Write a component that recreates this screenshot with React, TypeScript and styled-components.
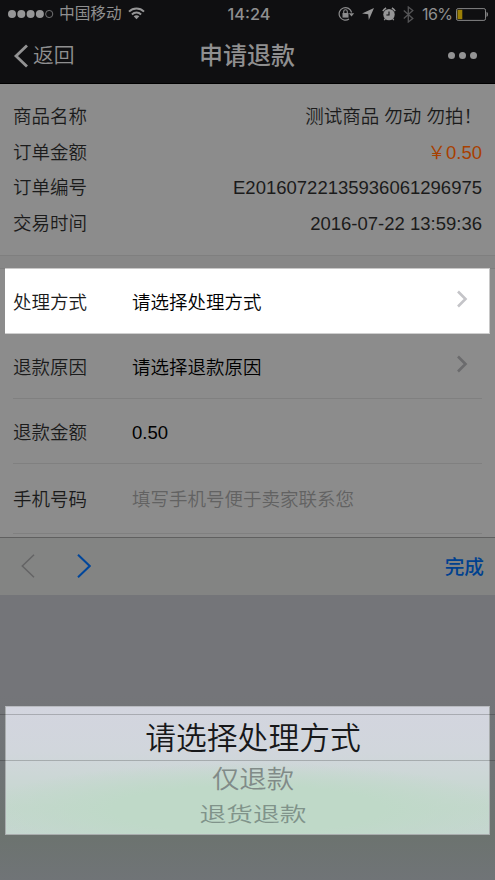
import React from "react";
import styled, { createGlobalStyle, css } from "styled-components";

const Global = createGlobalStyle`
  * { box-sizing: border-box; }
  body { margin: 0; background: #747579; }
`;

const Screen = styled.main`
  width: 495px;
  height: 880px;
  overflow: hidden;
  display: flex;
  flex-direction: column;
  background: #8c8c8c;
  color: #1b1b1b;
  font-family: "Liberation Sans", "Noto Sans CJK SC", sans-serif;
  font-size: 18.5px;
  font-weight: 350;
`;

const Header = styled.header`
  height: 84px;
  flex: none;
  background: #0f0f11;
  border-bottom: 1px solid #000;
  color: #8f8f90;
`;

const StatusBar = styled.div`
  height: 28px;
  display: grid;
  grid-template-columns: 1fr auto 1fr;
  align-items: center;
  padding: 0 6px 0 8px;
  font-family: Inter, "Noto Sans CJK SC", sans-serif;
  font-size: 16px;
  line-height: 28px;
  font-weight: 400;
`;

const Carrier = styled.div`
  display: flex;
  align-items: center;
  font-size: 15.7px;
  svg { display: block; }
  svg:last-child { position: relative; top: -1px; }
  span { margin: 0 6px 0 5px; }
`;

const Clock = styled.time`
  font-weight: 500;
  font-size: 16.3px;
  margin-left: 1px;
`;

const Indicators = styled.div`
  display: flex;
  align-items: center;
  justify-content: flex-end;
  svg { display: block; flex: none; }
`;

const Percent = styled.span`
  margin: 0 4px 0 8px;
  width: 30px;
  font-size: 16px;
  letter-spacing: -0.6px;
  white-space: nowrap;
`;

const NavBar = styled.nav`
  height: 55px;
  display: grid;
  grid-template-columns: 1fr auto 1fr;
  align-items: center;
  padding: 0 18px 0 13px;
`;

const Back = styled.div`
  display: flex;
  align-items: center;
  gap: 4px;
  font-size: 20.8px;
  line-height: 32px;
  padding-top: 1px;
`;

const Title = styled.h1`
  margin: 0 0 0 4px;
  font-size: 24px;
  line-height: 34px;
  padding-top: 1px;
  font-weight: 500;
`;

const More = styled.div`
  display: flex;
  justify-content: flex-end;
  gap: 4px;
`;

const Dot = styled.i`
  width: 7px;
  height: 7px;
  border-radius: 50%;
  background: #939394;
`;

const Order = styled.section`
  height: 171px;
  flex: none;
  padding: 15px 13px 0;
`;

const OrderLine = styled.div`
  height: 35.7px;
  display: flex;
  justify-content: space-between;
  align-items: center;
  line-height: 28px;
`;

const OrderValue = styled.span<{ $price?: boolean }>`
  color: ${(p) => (p.$price ? "#a84000" : "#1b1b1b")};
  white-space: pre;
`;

const Gap = styled.div`
  height: 14px;
  flex: none;
  background: #878787;
  border-top: 1px solid #7f7f7f;
  border-bottom: 1px solid #7f7f7f;
`;

const Form = styled.section`
  height: 269px;
  flex: none;
  margin-top: -1px;
`;

const Field = styled.div<{ $height: number; $active?: boolean }>`
  height: ${(p) => p.$height}px;
  margin: 0 13px;
  display: grid;
  grid-template-columns: 119px 1fr 13px;
  align-items: center;
  padding: 3px 13px 0 0;
  line-height: 28px;
  border-bottom: 1px solid #808080;
  ${(p) =>
    p.$active &&
    css`
      margin: 0 5px;
      padding: 3px 20px 0 8px;
      background: #fff;
      border-top: 1px solid #c9c8c8;
      border-right: 1px solid #c8c8c8;
      border-bottom-color: #cfcfcf;
    `}
`;

const FieldValue = styled.span<{ $placeholder?: boolean }>`
  color: ${(p) => (p.$placeholder ? "#626262" : "#000")};
`;

const Toolbar = styled.div`
  height: 58px;
  flex: none;
  display: flex;
  align-items: center;
  padding: 0 11px 0 21px;
  background: #838483;
  border-top: 1px solid #606060;
`;

const Stepper = styled.div`
  display: flex;
  gap: 42px;
  flex: 1;
  margin-top: -2px;
  svg { display: block; }
`;

const Done = styled.span`
  color: #00418f;
  font-size: 19.7px;
  line-height: 30px;
  padding-top: 1px;
  font-weight: 500;
`;

const Picker = styled.section`
  flex: 1;
  display: flex;
  flex-direction: column;
  padding-top: 111px;
  background: linear-gradient(#747579 0, #747579 100px, #6f7476 170px, #6c736f 240px, #707477 285px);
`;

const Wheel = styled.div`
  height: 129px;
  margin: 0 5px;
  padding: 7px 0 0 10px;
  display: flex;
  flex-direction: column;
  background:
    radial-gradient(ellipse 270px 46px at 50% 102px, #bfd9c8 0%, #bfd9c8 50%, rgba(191, 217, 200, 0) 100%),
    linear-gradient(#d3d5df 0, #d1d6dc 45px, #cdd7d7 65px, #c4d7cd 100px, #c5d6d0 129px);
  border: 1px solid #a9adae;
  border-top-color: #b9bbc0;
`;

const Option = styled.div<{ $kind: "selected" | "near" | "far" }>`
  text-align: center;
  white-space: nowrap;
  ${(p) =>
    p.$kind === "selected" &&
    css`
      height: 47px;
      margin: 0 -6px 0 -16px;
      border-top: 1px solid rgba(0, 0, 0, 0.2);
      border-bottom: 1px solid rgba(0, 0, 0, 0.2);
      color: #17181a;
      font-size: 30.8px;
      line-height: 48px;
      padding-left: 11px;
    `}
  ${(p) =>
    p.$kind === "near" &&
    css`
      height: 37px;
      padding-left: 1px;
      color: #818b88;
      font-size: 27.4px;
      line-height: 38px;
      transform: scaleY(0.92);
    `}
  ${(p) =>
    p.$kind === "far" &&
    css`
      height: 34px;
      padding-left: 1px;
      color: #80938a;
      font-size: 26.8px;
      line-height: 35px;
      transform: scaleY(0.75);
    `}
`;

const Chevron = () => (
  <svg width="13" height="18" viewBox="0 0 13 18" fill="none" stroke="currentColor" strokeWidth="2.6">
    <path d="M2 1.5 9.5 9 2 16.5" />
  </svg>
);

const ActiveChevron = styled.span`
  color: #c4c4c8;
  height: 18px;
  margin-top: -7px;
  display: flex;
`;
const MutedChevron = styled(ActiveChevron)`
  color: #6b6b6d;
`;

const Signal = () => (
  <svg width="46" height="10" viewBox="0 0 46 10" fill="#969697">
    {[4, 13.3, 22.6, 31.9].map((x) => (
      <circle key={x} cx={x} cy="5" r="4" />
    ))}
    <circle cx="41.2" cy="5" r="3.6" fill="none" stroke="#7c7c7d" strokeWidth="0.9" />
  </svg>
);

const Wifi = () => (
  <svg width="17" height="13" viewBox="0 0 17 13" fill="none" stroke="#969697" strokeWidth="2">
    <path d="M1 4.6C5.2.5 11.8.5 16 4.6M3.9 7.4c2.6-2.4 6.6-2.4 9.2 0" />
    <path d="M5.7 9.3c1.6-1.5 4-1.5 5.6 0L8.5 12.2z" fill="#969697" stroke="none" />
  </svg>
);

const RotationLock = () => (
  <svg width="17" height="16" viewBox="0 0 17 16" fill="none" stroke="#8c8c8d">
    <path d="M13.6 6.5A6.3 6.3 0 1 0 11 13.1" strokeWidth="1.2" />
    <path d="M10.8 7.2h5.4l-2.7 3.4z" fill="#8c8c8d" stroke="none" />
    <rect x="4.5" y="7" width="6" height="4.6" fill="#8c8c8d" stroke="none" />
    <path d="M5.7 7.4V5.6a1.8 1.8 0 0 1 3.6 0v1.8" strokeWidth="1.1" />
  </svg>
);

const Location = () => (
  <svg width="12" height="12" viewBox="0 0 12 12" fill="#969697">
    <path d="M12 0 6.8 12 6.2 6.2 0 5.4z" />
  </svg>
);

const Alarm = () => (
  <svg width="14" height="15" viewBox="0 0 14 15" fill="none" stroke="#969697">
    <circle cx="7" cy="7.6" r="5.7" fill="#969697" stroke="none" />
    <path d="M.8 4.1A7.4 7.4 0 0 1 4.1 1M9.9 1a7.4 7.4 0 0 1 3.3 3.1" strokeWidth="1.4" />
    <path d="m3.4 11.6-1.2 1.5m8.4-1.5 1.2 1.5" strokeWidth="1.2" />
    <path d="M7 4.4V8H4.4" stroke="#0f0f11" strokeWidth="1.1" />
  </svg>
);

const Bluetooth = () => (
  <svg width="11" height="17" viewBox="0 0 11 17" fill="none" stroke="#545456" strokeWidth="1.3">
    <path d="m.8 4.5 9 8L5.3 16V1l4.5 3.5-9 8" />
  </svg>
);

const Battery = () => (
  <svg width="33" height="13" viewBox="0 0 33 13">
    <rect x=".5" y=".6" width="29" height="11.8" rx="1.6" fill="none" stroke="#858586" />
    <rect x="1.5" y="1.8" width="4.8" height="9.4" fill="#9b7f06" />
    <path d="M30.5 4.1c2 .4 2 4.4 0 4.8z" fill="#858586" />
  </svg>
);

const IconRow = styled.span`
  display: flex;
  align-items: center;
  gap: 7.5px;
`;

const orderLines = [
  { label: "商品名称", value: "测试商品 勿动 勿拍！" },
  { label: "订单金额", value: "￥0.50", price: true },
  { label: "订单编号", value: "E20160722135936061296975" },
  { label: "交易时间", value: "2016-07-22 13:59:36" },
];

export default function App() {
  return (
    <>
      <Global />
      <Screen>
        <Header>
          <StatusBar>
            <Carrier>
              <Signal />
              <span>中国移动</span>
              <Wifi />
            </Carrier>
            <Clock>14:24</Clock>
            <Indicators>
              <IconRow>
                <RotationLock />
                <Location />
                <Alarm />
                <Bluetooth />
              </IconRow>
              <Percent>16%</Percent>
              <Battery />
            </Indicators>
          </StatusBar>
          <NavBar>
            <Back>
              <svg width="16" height="24" viewBox="0 0 16 24" fill="none" stroke="#929293" strokeWidth="2.8">
                <path d="M14 1.5 3 12l11 10.5" />
              </svg>
              返回
            </Back>
            <Title>申请退款</Title>
            <More>
              <Dot />
              <Dot />
              <Dot />
            </More>
          </NavBar>
        </Header>

        <Order>
          {orderLines.map((l) => (
            <OrderLine key={l.label}>
              <span>{l.label}</span>
              <OrderValue $price={l.price}>{l.value}</OrderValue>
            </OrderLine>
          ))}
        </Order>
        <Gap />

        <Form>
          <Field $height={66} $active>
            <span>处理方式</span>
            <FieldValue>请选择处理方式</FieldValue>
            <ActiveChevron><Chevron /></ActiveChevron>
          </Field>
          <Field $height={65}>
            <span>退款原因</span>
            <FieldValue>请选择退款原因</FieldValue>
            <MutedChevron><Chevron /></MutedChevron>
          </Field>
          <Field $height={65}>
            <span>退款金额</span>
            <FieldValue>0.50</FieldValue>
          </Field>
          <Field $height={70}>
            <span>手机号码</span>
            <FieldValue $placeholder>填写手机号便于卖家联系您</FieldValue>
          </Field>
        </Form>

        <Toolbar>
          <Stepper>
            <svg width="14" height="24" viewBox="0 0 14 24" fill="none" stroke="#646465" strokeWidth="1.5">
              <path d="M13 .8 1.3 12 13 23.2" />
            </svg>
            <svg width="14" height="24" viewBox="0 0 14 24" fill="none" stroke="#00469b" strokeWidth="2">
              <path d="m1 .8 11.7 11.2L1 23.2" />
            </svg>
          </Stepper>
          <Done>完成</Done>
        </Toolbar>

        <Picker>
          <Wheel>
            <Option $kind="selected">请选择处理方式</Option>
            <Option $kind="near">仅退款</Option>
            <Option $kind="far">退货退款</Option>
          </Wheel>
        </Picker>
      </Screen>
    </>
  );
}
